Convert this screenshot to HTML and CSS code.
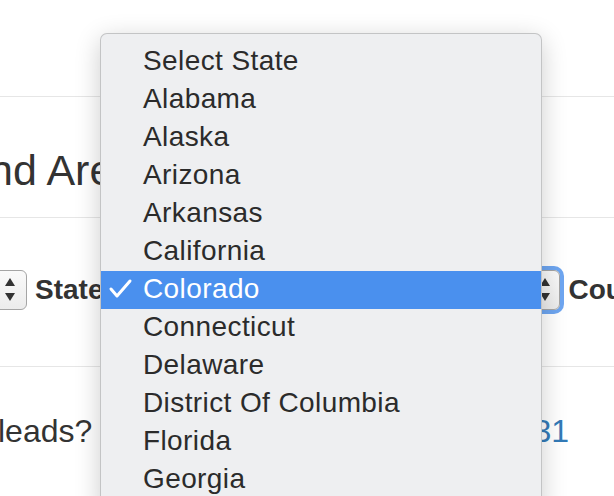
FILE: index.html
```html
<!DOCTYPE html>
<html lang="en">
<head>
  <meta charset="UTF-8">
  <title>Leads by State and Area</title>
  <link rel="stylesheet" href="styles.css">
</head>
<body>
  <div class="page">
    <div class="top"></div>

    <div class="title">
      <h2>nd Area</h2>
    </div>

    <div class="filters">
      <div class="select prev">
        <svg class="arrows" width="12" height="24" viewBox="0 0 12 24"><path d="M1 8 L6 0 L11 8 Z M1 15 L11 15 L6 23 Z" fill="#333"/></svg>
      </div>
      <label class="lbl">State</label>
      <div class="select state focused">
        <svg class="arrows" width="12" height="24" viewBox="0 0 12 24"><path d="M1 8 L6 0 L11 8 Z M1 15 L11 15 L6 23 Z" fill="#333"/></svg>
      </div>
      <label class="lbl county">County</label>
    </div>

    <div class="result">
      <span class="question">leads?</span>
      <a class="count" href="#">31</a>
    </div>

    <!-- open state dropdown -->
    <ul class="menu">
      <li><span class="mark"></span>Select State</li>
      <li><span class="mark"></span>Alabama</li>
      <li><span class="mark"></span>Alaska</li>
      <li><span class="mark"></span>Arizona</li>
      <li><span class="mark"></span>Arkansas</li>
      <li><span class="mark"></span>California</li>
      <li class="selected">
        <span class="mark"><svg width="42" height="36" viewBox="0 0 42 36"><polyline points="10,18 16,25 29,10" fill="none" stroke="#fff" stroke-width="3" stroke-linecap="round" stroke-linejoin="round"/></svg></span>Colorado
      </li>
      <li><span class="mark"></span>Connecticut</li>
      <li><span class="mark"></span>Delaware</li>
      <li><span class="mark"></span>District Of Columbia</li>
      <li><span class="mark"></span>Florida</li>
      <li><span class="mark"></span>Georgia</li>
    </ul>
  </div>
</body>
</html>
```

FILE: styles.css
```css
body {
  margin: 0;
  background: #fff;
  font-family: 'Liberation Sans', Arial, sans-serif;
  color: #333;
}
.page {
  position: relative;
  width: 614px;
  height: 496px;
  overflow: hidden;
}
.top {
  height: 96px;
  border-bottom: 1px solid #e6e6e6;
}
.title {
  height: 121px;
  padding-top: 48px;
  box-sizing: border-box;
  border-bottom: 1px solid #e6e6e6;
  white-space: nowrap;
}
.title h2 {
  margin: 0 0 0 -11px;
  font-size: 43px;
  font-weight: normal;
  line-height: 50px;
}
.filters {
  height: 149px;
  padding-top: 52px;
  box-sizing: border-box;
  border-bottom: 1px solid #e6e6e6;
  display: flex;
  align-items: flex-start;
  margin-left: -13px;
  white-space: nowrap;
}
.select {
  flex-shrink: 0;
  height: 40px;
  box-sizing: border-box;
  border: 1px solid #a5a5a5;
  border-radius: 6px;
  background: linear-gradient(#fafafa, #ececec);
  display: flex;
  align-items: center;
  justify-content: flex-end;
}
.select.prev {
  width: 40px;
  padding-right: 10px;
}
.select.state {
  width: 449px;
  margin-left: 8px;
  padding-right: 8px;
}
.focused {
  box-shadow: 0 0 0 4px rgba(74, 144, 238, 0.8);
}
.lbl {
  font-weight: bold;
  font-size: 28px;
  line-height: 40px;
  margin-left: 8px;
}
.result {
  display: flex;
  justify-content: space-between;
  padding: 44px 45px 0 0;
  font-size: 32px;
  line-height: 40px;
}
.question {
  margin-left: -2px;
}
.count {
  color: #337ab7;
  text-decoration: none;
}
.menu {
  position: absolute;
  left: 100px;
  top: 33px;
  width: 442px;
  height: 480px;
  box-sizing: border-box;
  margin: 0;
  padding: 9px 0 0;
  list-style: none;
  background: #eeeff1;
  border: 1px solid rgba(0, 0, 0, 0.18);
  border-radius: 7px;
  box-shadow: 0 6px 26px rgba(0, 0, 0, 0.2);
  font-size: 28px;
  letter-spacing: 0.4px;
  color: #2b2b2b;
  overflow: hidden;
}
.menu li {
  display: flex;
  height: 36px;
  line-height: 36px;
  padding-bottom: 2px;
  white-space: nowrap;
}
.menu .mark {
  width: 42px;
  flex-shrink: 0;
  display: flex;
}
.menu li.selected {
  background: #4a90ee;
  color: #fff;
}
```
